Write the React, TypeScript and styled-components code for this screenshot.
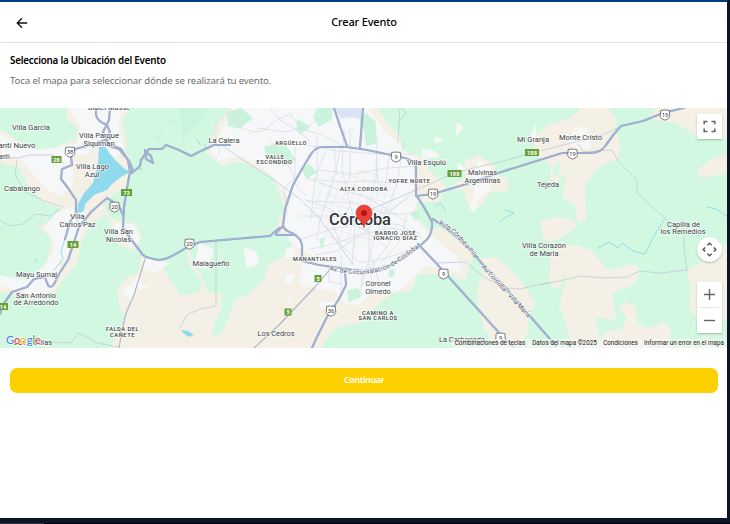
import React from "react";
import styled, { createGlobalStyle } from "styled-components";

const GlobalStyle = createGlobalStyle`
  * { box-sizing: border-box; }
  body { margin: 0; background: #0b1524; overflow: hidden; }
`;

const Frame = styled.div`
  width: 730px;
  height: 524px;
  display: flex;
  flex-direction: column;
  background: #0c1526;
  font-family: "Noto Sans", "Open Sans", sans-serif;
`;

const Screen = styled.div`
  width: 727px;
  height: 518px;
  display: flex;
  flex-direction: column;
  background: #fff;
  border-top: 2px solid #003e80;
`;

const TopBar = styled.header`
  height: 41px;
  flex: none;
  display: grid;
  grid-template-columns: 44px 1fr 44px;
  align-items: center;
  border-bottom: 1px solid #e2e2e2;
`;

const BackButton = styled.button`
  border: 0;
  padding: 1px 0 0;
  background: none;
  display: flex;
  justify-content: center;
  color: #111;
`;

const Title = styled.h1`
  margin: 0 0 2px 1px;
  text-align: center;
  font-size: 11px;
  line-height: 15px;
  font-weight: 500;
  letter-spacing: -0.17px;
  color: #000;
  white-space: nowrap;
`;

const Intro = styled.section`
  height: 65px;
  flex: none;
  padding: 11px 10px 0;
  display: flex;
  flex-direction: column;
  gap: 6px;
`;

const Heading = styled.h2`
  margin: 0;
  font-size: 9.8px;
  line-height: 14px;
  font-weight: 600;
  color: #000;
  letter-spacing: -0.22px;
`;

const Hint = styled.p`
  margin: 0;
  font-size: 9.6px;
  line-height: 14px;
  letter-spacing: -0.11px;
  color: #6d6d6d;
`;

const MapFrame = styled.div`
  position: relative;
  height: 240px;
  flex: none;
  overflow: hidden;
  background: #d3f8e2;
`;

const MapArt = styled.svg`
  display: block;
  font-family: Roboto, sans-serif;
`;

const Controls = styled.div`
  position: absolute;
  right: 5px;
  top: 6px;
  bottom: 15px;
  width: 25px;
  display: flex;
  flex-direction: column;
`;

const MapButton = styled.button<{ $round?: boolean }>`
  width: 25px;
  height: 25px;
  flex: none;
  padding: 0;
  border: 0;
  display: flex;
  align-items: center;
  justify-content: center;
  background: #fff;
  border-radius: ${(p) => (p.$round ? "50%" : "1px")};
  box-shadow: 0 1px 2px rgba(0, 0, 0, 0.25);
  margin-top: ${(p) => (p.$round ? "98px" : "0")};
`;

const ZoomGroup = styled.div`
  margin-top: auto;
  height: 51px;
  display: flex;
  flex-direction: column;
  align-items: center;
  background: #fff;
  border-radius: 1px;
  box-shadow: 0 1px 2px rgba(0, 0, 0, 0.25);
`;

const ZoomButton = styled.button`
  width: 25px;
  height: 25px;
  padding: 0;
  border: 0;
  background: none;
  display: flex;
  align-items: center;
  justify-content: center;
`;

const ZoomDivider = styled.div`
  width: 19px;
  height: 1px;
  background: #e2e2e2;
`;

const Credits = styled.div`
  position: absolute;
  right: 0;
  bottom: 0;
  height: 9px;
  display: flex;
  align-items: center;
  background: rgba(246, 246, 242, 0.65);
  font: 6.3px/9px Roboto, sans-serif;
  color: #222;
  white-space: nowrap;
`;

const Credit = styled.span<{ $w: number }>`
  width: ${(p) => p.$w}px;
  text-align: center;
`;

const Continue = styled.button`
  margin: 20px 9px 0 10px;
  height: 25px;
  flex: none;
  border: 0;
  border-radius: 7px;
  background: #ffd000;
  color: #fff;
  font: 600 9px/13px "Noto Sans", sans-serif;
  letter-spacing: -0.4px;
  padding: 0 0 2px;
`;

const Taskbar = styled.div`
  margin-top: auto;
  height: 1px;
  background: linear-gradient(90deg, #37343c 44px, #020207 44px);
`;

const CREAM = "#f5f0e5";
const URBAN = "#f6f7f8";
const GREEN = "#d3f8e2";

const creamAreas = [
  "M67 108H128L121 121 126 142 124 150 132 165 128 184 113 194 103 203 108 216 118 222 135 224 141 238 134 250 118 243 112 225 107 212 92 222 82 238 75 265 62 280 56 290 40 300 22 296 0 291V281L30 279 47 264 53 240 40 226 55 220 62 207 46 203 30 187 19 166 0 162V130L18 142 36 151 58 147 76 140 79 128 68 120Z",
  "M142 256 160 264 174 287 180 297 199 293 203 282 190 265 187 247 200 243 218 252 236 247 249 232 273 229 300 229 300 348H111L125 319 119 303 118 289 126 279 139 274Z",
  "M230 108H376L386 122 399 136 403 153 423 157 427 169 446 187 438 201 416 202 417 218 427 230 443 229 472 252 465 280 446 273 417 274 411 290 393 292 372 308 362 321 336 327 324 341 320 348H250L240 260 275 232 285 207 273 176 252 165 238 161 223 165 207 154 217 125Z",
  "M465 161 478 156 494 166 494 175 506 178 508 190 490 192 479 207 470 207 464 190 450 187 466 178Z",
  "M536 137 548 126 570 119 582 108H607L616 120 614 130 620 145 618 158 602 164 591 175 584 185 586 219 579 222 574 204 563 198 567 169 560 178 561 158 554 165 551 178 558 182 558 176 550 176 552 164 540 158 534 148Z",
  "M657 108H727V137L701 138 678 123 650 118Z",
  "M698 170 711 160 727 155V173L702 177Z",
  "M541 222 556 218 572 220 576 226 563 236 550 241 544 238Z",
  "M552 253Q556 248 569 246 582 246 590 251L608 271 626 267Q637 262 639 271 638 280 632 284L611 293 613 306 615 319 594 316 599 337 590 348H573L566 322 560 307 567 278Q568 271 564 274L559 287Q547 287 550 278Z",
  "M480 259 496 258 506 267 522 283 535 304 527 315 527 332 516 348H500L485 329 479 308 478 288 486 268Z",
  "M593 348 607 332 622 330 628 318 620 308 625 303 634 306 637 325 650 329 664 323 671 331 666 348Z",
  "M727 245V318L699 320 690 308 692 285 688 278 690 269 701 263 710 250Z",
  "M704 334 707 341 711 348H702Z",
];

const greenInsets = [
  "M240 240 252 232 275 230 294 243 281 257 268 263 264 278 249 293 234 299 227 320 220 334 213 336 214 326 221 311 223 294 208 291 201 273 193 263 190 249 205 242 220 253Z",
];

const urbanAreas = [
  "M69 108H124L117 121 121 140 124 150 105 162 98 139 87 154 70 154 73 182 63 195 48 190 22 160 3 153 0 136 38 151 77 144 82 127Z",
  "M57 213 80 205 85 216 80 235 68 249 66 260 47 263 57 245 45 228Z",
  "M0 276 25 281 49 263 58 260 60 268 51 290 30 294 0 285Z",
  "M115 224 133 225 139 239 132 247 122 240Z",
  "M143 256 157 261 168 263 154 272 145 269Z",
  "M139 277 141 286 149 286 135 290 132 301 122 292Z",
  "M234 108H367L383 130 399 146 412 158 415 179 417 199 410 215 433 238 455 256 461 272 426 265 410 279 397 292 372 292 359 304 345 303 335 291 300 285 303 264 315 257 292 243 285 226 291 201 276 179 259 164 238 155 219 160 212 150Z",
  "M479 161 492 171 490 190 479 198 474 211 470 208 475 197 473 174Z",
  "M575 127 587 129 590 147 577 149 570 143Z",
  "M244 248 256 252 258 264 247 267Z",
  "M200 244 213 250 207 268 195 266Z",
];

const parks = [
  "M265 147 278 145 286 147 295 160 284 165 278 158 267 158Z",
  "M298 120 309 127 300 134 297 129Z",
  "M309 165 316 172 307 178 302 169Z",
  "M318 108H332L331 119 319 126 314 117Z",
  "M228 113 241 109 252 118 239 128 228 125Z",
  "M359 118 366 114 375 122 376 143 367 145 364 128Z",
  "M411 213 418 211 420 219 414 219Z",
  "M320 240 324 238 322 248Z",
  "M348 291 358 289 360 297 349 301Z",
  "M390 271 394 270 393 276 389 276Z",
];

const pale = [
  "M457 135 462 127 457 124Z",
  "M436 137 442 140 436 142Z",
  "M422 149 435 152 439 157 424 157Z",
  "M529 141 535 126 536 140Z",
  "M458 164 465 169 459 170Z",
  "M287 249 294 247 293 256 286 258Z",
  "M286 275 293 275 292 284 286 283Z",
  "M288 298 292 297 290 303Z",
  "M320 302 338 303 335 309 321 308Z",
];

const localRoads = [
  "M220 144 240 158 277 182 301 200 320 219 353 264",
  "M49 342 71 343 78 333 85 336 97 343 119 347",
  "M362 213 400 197 430 184 456 172 500 162 540 151 602 135 618 128",
  "M0 157 18 158 30 155 53 155 64 164",
  "M578 144 584 152 612 150 618 161 637 180V193L670 223",
  "M0 220 10 226 23 224 36 214 51 216 60 209",
  "M540 285 568 279 581 276 604 278 628 277 639 271 660 273 687 270",
  "M687 271 684 248 683 220",
  "M216 242V306L200 309 187 315 180 328",
  "M437 263 466 262 484 277 505 288 520 289 550 282",
  "M400 108 398 141M398 123 406 113 402 108",
  "M17 161 15 174 24 191 44 201 63 207",
];

const regionalRoads = [
  "M145 259 134 295 126 313 122 330 119 348",
  "M332 267 315 287 278 326 254 348",
];

const streets = [
  "M232 110 239 127 253 132 263 131 275 121 290 114 301 129 320 134 341 145",
  "M230 110 216 123 216 143 220 149 218 155",
  "M270 108 280 120 300 132 310 142M257 128 285 132 307 126 321 118",
  "M295 144 295 178 284 188 287 213M270 140 291 170 296 185 305 195",
  "M317 137V178M334 147 337 175M350 128V178M376 150 378 184M390 151 385 186",
  "M307 178 323 184 340 190 362 195 385 208 406 222",
  "M304 199 328 208 346 219 365 230 386 247",
  "M300 216 330 216 360 220 400 225 421 237",
  "M301 239 332 229 358 224 390 210 414 194",
  "M310 249 333 244 360 235 389 228 419 233",
  "M327 147 315 179 311 219M341 145 333 183 320 220 317 239",
  "M377 138 376 178 369 211 369 268 374 290",
  "M404 141 397 184 388 205 374 239 362 285",
  "M417 188 391 211 367 230 337 251 315 255",
  "M416 166 387 168 354 174 320 170 308 174",
  "M417 214 387 214 352 203 306 201",
  "M344 130 342 169 349 200 355 224 352 265",
  "M307 145 337 151 380 154 414 154",
  "M312 179 339 182 373 181 414 184",
  "M397 223 389 244 377 260 364 276M407 216 400 241 379 265",
  "M331 219 340 244 360 263 386 258 407 251",
  "M328 264 329 282 343 284M341 256 341 294M362 267 361 295M371 255 380 287",
];

const highways = [
  "M96 108V115Q98 122 107 125M107 125 110 132 105 140 91 145 75 149 71 157 72 165 62 169 61 179 68 188 76 200 76 213 70 222 65 239",
  "M110 108 109 120 103 132 109 144 121 149 128 160 130 172 127 188 124 207 123 228 130 238 140 251Q143 257 150 258 161 262 170 257L188 247 200 242 270 236 279 228",
  "M123 215 119 206 107 198 91 212 79 227 73 245 68 260 59 274 54 284Q50 290 47 283L45 277 34 279 27 287 12 292 3 305 0 314",
  "M106 145 119 149 129 161 132 168 132 173 140 166 141 160 149 149 162 149 166 145 179 150 191 156 201 151 214 145 230 145",
  "M145 150 146 159 153 163 151 156 147 153",
  "M276 235 294 235",
  "M312 348 317 337 327 317 339 299 346 285 345 271",
  "M283 226Q285 231 292 233 303 239 302 248V261L319 265 333 267 363 271 387 267 407 256 423 243Q433 236 432 222 424 206 416 195V168Q416 160 401 157L367 150 347 147H322Q314 147 308 159L302 169 293 185 285 209 283 226 276 233",
  "M334 108 341 129 347 146M363 108 360 147",
  "M418 244 436 263 502 336 514 348",
  "M433 219 447 229 468 247 485 267 505 287 529 315 556 346",
  "M416 196 433 194 473 182 498 173 543 159 562 153H590Q601 153 606 145L614 134 621 126 643 121 663 113 684 108",
];

const rivers = [
  "M132 169 142 169M598 248 609 242 618 248 622 243 633 251 645 254 654 236 664 220",
  "M65 239 61 251 63 259 54 270M77 222 79 217",
  "M707 207 716 209 727 216M704 229 698 236",
  "M435 207 440 203 446 211M500 222 506 217 514 213 505 210",
  "M200 144 197 140M205 144 206 149M356 219 365 222 370 219",
];

type LabelProps = { x: number; y: number; w: number; text: string; caps?: boolean };

const labels: LabelProps[] = [
  { x: 31, y: 129.5, w: 38, text: "Villa Garcia" },
  { x: 17, y: 147.5, w: 37, text: "anti Nuevo" },
  { x: 4, y: 159, w: 11, text: "anti" },
  { x: 109, y: 110, w: 42, text: "Bialet Massé" },
  { x: 99, y: 138, w: 40, text: "Villa Parque" },
  { x: 99, y: 145.5, w: 31, text: "Siquiman" },
  { x: 92.5, y: 169, w: 33, text: "Villa Lago" },
  { x: 92, y: 177, w: 14.5, text: "Azul" },
  { x: 22, y: 190.5, w: 36, text: "Cabalango" },
  { x: 77.5, y: 219, w: 14.5, text: "Villa" },
  { x: 77.5, y: 227, w: 36, text: "Carlos Paz" },
  { x: 118.5, y: 234, w: 29, text: "Villa San" },
  { x: 118.5, y: 242, w: 25, text: "Nicolas" },
  { x: 36.5, y: 277, w: 41, text: "Mayu Sumaj" },
  { x: 36, y: 297.5, w: 40, text: "San Antonio" },
  { x: 36, y: 305, w: 45, text: "de Arredondo" },
  { x: 33, y: 345, w: 38, text: "Las Varillas" },
  { x: 224, y: 142.5, w: 31, text: "La Calera" },
  { x: 291, y: 144.5, w: 32, text: "ARGÜELLO", caps: true },
  { x: 275, y: 158.5, w: 19, text: "VALLE", caps: true },
  { x: 274.5, y: 164, w: 36, text: "ESCONDIDO", caps: true },
  { x: 364, y: 191, w: 48, text: "ALTA CÓRDOBA", caps: true },
  { x: 409.5, y: 182.5, w: 42, text: "YOFRE NORTE", caps: true },
  { x: 395.5, y: 234.5, w: 41, text: "BARRIO JOSÉ", caps: true },
  { x: 395.5, y: 240, w: 44, text: "IGNACIO DÍAZ", caps: true },
  { x: 315, y: 261, w: 44, text: "MANANTIALES", caps: true },
  { x: 378, y: 314.5, w: 32, text: "CAMINO A", caps: true },
  { x: 378, y: 320, w: 39, text: "SAN CARLOS", caps: true },
  { x: 122.5, y: 331, w: 33, text: "FALDA DEL", caps: true },
  { x: 122.5, y: 336.5, w: 25, text: "CAÑETE", caps: true },
  { x: 211, y: 266, w: 37, text: "Malagueño" },
  { x: 276, y: 336, w: 37, text: "Los Cedros" },
  { x: 378, y: 286, w: 25, text: "Coronel" },
  { x: 378, y: 293.5, w: 25.5, text: "Olmedo" },
  { x: 426.5, y: 165, w: 39, text: "Villa Esquiú" },
  { x: 482.5, y: 175, w: 29, text: "Malvinas" },
  { x: 482.5, y: 182.5, w: 36, text: "Argentinas" },
  { x: 533, y: 142, w: 32, text: "Mi Granja" },
  { x: 580.5, y: 140, w: 43, text: "Monte Cristo" },
  { x: 548, y: 187, w: 22, text: "Tejeda" },
  { x: 544, y: 248, w: 44, text: "Villa Corazón" },
  { x: 544, y: 256, w: 29, text: "de Maria" },
  { x: 683.5, y: 227, w: 33, text: "Capilla de" },
  { x: 683, y: 234, w: 45, text: "los Remedios" },
  { x: 462, y: 342, w: 46, text: "La Carbonada" },
];

function Label({ x, y, w, text, caps }: LabelProps) {
  return (
    <text
      x={x}
      y={y}
      textLength={w}
      textAnchor="middle"
      lengthAdjust="spacingAndGlyphs"
      fontSize={caps ? 5.7 : 7.5}
      fontWeight={caps ? 500 : 400}
      letterSpacing={caps ? 0.5 : 0}
      fill="#3a3e43"
      stroke="#fff"
      strokeOpacity={0.8}
      strokeWidth={1.4}
      paintOrder="stroke"
    >
      {text}
    </text>
  );
}

const shields: [number, number, string][] = [
  [70, 152, "38"], [114.5, 207, "20"], [189.5, 244, "20"], [331, 311, "36"],
  [396, 157, "9"], [433, 194, "19"], [443.5, 274, "9"], [500.5, 338, "9"],
  [572.5, 154, "19"], [665, 115, "19"],
];

function Shield({ x, y, n }: { x: number; y: number; n: string }) {
  return (
    <g transform={`translate(${x} ${y})`}>
      <path
        d="M-4.3-4.6Q0-5.3 4.3-4.6L4.8 1.5Q4.6 3.6 0 5.2-4.6 3.6-4.8 1.5Z"
        fill="#fff"
        stroke="#5a5e64"
        strokeWidth=".8"
      />
      <text y="2.1" textAnchor="middle" fontSize="5.8" fill="#333">{n}</text>
    </g>
  );
}

const plates: [number, number, string, number][] = [
  [56.5, 159.5, "28", 10], [126.5, 192.5, "73", 11], [73, 244.5, "14", 11], [3, 306.5, "14", 10],
  [318, 278.5, "5", 7], [288, 312, "5", 7], [454.5, 173.5, "188", 14], [532, 152.5, "188", 14],
];

function Plate({ x, y, n, w }: { x: number; y: number; n: string; w: number }) {
  return (
    <g transform={`translate(${x} ${y})`}>
      <rect x={-w / 2} y="-3.5" width={w} height="7" fill="#689f38" />
      <text y="2.1" textAnchor="middle" fontSize="5.7" fontWeight="700" fill="#fff">{n}</text>
    </g>
  );
}

function Drawn({ paths, fill }: { paths: string[]; fill: string }) {
  return (
    <g fill={fill} stroke={fill} strokeWidth="1.5" strokeLinejoin="round">
      {paths.map((d) => <path key={d} d={d} />)}
    </g>
  );
}

function Lines({ paths, color, width }: { paths: string[]; color: string; width: number }) {
  return (
    <g fill="none" stroke={color} strokeWidth={width} strokeLinejoin="round" strokeLinecap="round">
      {paths.map((d) => <path key={d} d={d} />)}
    </g>
  );
}

function CordobaMap() {
  return (
    <MapArt width="727" height="240" viewBox="0 108 727 240">
      <defs>
        <path id="ring" d="M330 268Q374 280 401 258L422 243" />
        <path id="pilar" d="M439 222Q452 228 460 238L480 261" />
        <path id="maria" d="M483 266 505 290 532 319" />
        <pattern id="blocks" width="8" height="8" patternUnits="userSpaceOnUse" patternTransform="rotate(16)">
          <path d="M0 0H8M0 0V8" stroke="#dbe0e7" strokeWidth=".8" fill="none" />
        </pattern>
      </defs>
      <rect x="0" y="108" width="727" height="240" fill={GREEN} />
      <path d="M180 108H207L197 126 190 130 182 145Z M154 139 164 130 161 141Z M166 122 174 119 177 126Z" fill="#cbf4dc" />
      <Drawn paths={creamAreas} fill={CREAM} />
      <Drawn paths={greenInsets} fill={GREEN} />
      <Drawn paths={urbanAreas} fill={URBAN} />
      <Drawn paths={parks} fill="#c9f3db" />
      <Drawn paths={pale} fill={URBAN} />
      <path d="M335 108H361V119L350 117 341 119Z" fill="#dbe3f6" />
      <path d="M320 182 345 169 374 172 395 187 393 219 377 237 352 249 326 236 313 216Z" fill="url(#blocks)" />
      <Lines paths={streets} color="#d8dee6" width={0.8} />
      <Lines paths={localRoads} color="#c0cad6" width={0.8} />
      <Lines paths={regionalRoads} color="#a9b5ca" width={1.1} />
      <Lines paths={rivers} color="#8cd9ea" width={0.9} />
      <path d="M99 147Q105 144 108 151L116 161 125 169 130 172 121 177 113 183 107 190 94 195 86 203 83 212 77 213 78 204 84 193 93 183 98 163Z" fill="#90daee" />
      <path d="M181 330 188 331 194 335 189 337 183 333Z" fill="#90daee" />
      <path d="M34 258 39 260 36 264Z" fill="#b3ebef" />
      <Lines paths={highways} color="#94a4c6" width={2.2} />
      <Lines paths={highways} color="#a6b6d4" width={1.2} />
      {shields.map(([x, y, n]) => <Shield key={`${x}-${n}`} x={x} y={y} n={n} />)}
      {plates.map(([x, y, n, w]) => <Plate key={`${x}-${n}`} x={x} y={y} n={n} w={w} />)}
      {labels.map((l) => <Label key={`${l.x}-${l.text}`} {...l} />)}
      <g fontSize="6.4" fill="#46536c" stroke="#f8f8f8" strokeWidth="1.3" paintOrder="stroke">
        <text dy="2"><textPath href="#ring">Av. de Circunvalación de Córdoba</textPath></text>
        <text dy="2"><textPath href="#pilar">Autp Córdoba Pilar</textPath></text>
        <text dy="2"><textPath href="#maria">Au Córdoba - Villa María</textPath></text>
      </g>
      <text x="360" y="225" textLength="62" textAnchor="middle" fontSize="16.5" fontWeight="500" fill="#33363a" stroke="#fff" strokeWidth="1.6" paintOrder="stroke">Córdoba</text>
      <path d="M364 228C363.3 221.5 356 219.5 356 213A8 8 0 0 1 372 213C372 219.5 364.7 221.5 364 228Z" fill="#ea4335" stroke="#c5221f" strokeWidth=".4" />
      <circle cx="364" cy="213" r="3" fill="#b31412" />
      <text x="6" y="344" fontSize="12" fontWeight="500" textLength="35" lengthAdjust="spacingAndGlyphs" stroke="#fff" strokeWidth="1.2" paintOrder="stroke" fontFamily="Lato, sans-serif">
        <tspan fill="#4285f4">G</tspan><tspan fill="#ea4335">o</tspan><tspan fill="#fbbc04">o</tspan><tspan fill="#4285f4">g</tspan><tspan fill="#34a853">l</tspan><tspan fill="#ea4335">e</tspan>
      </text>
    </MapArt>
  );
}

export default function App() {
  return (
    <>
      <GlobalStyle />
      <Frame>
        <Screen>
          <TopBar>
            <BackButton aria-label="Volver">
              <svg width="12" height="12" viewBox="0 0 12 12" fill="none" stroke="currentColor" strokeWidth="1.3">
                <path d="M11.2 6H1.5M6 1.2 1.2 6 6 10.8" />
              </svg>
            </BackButton>
            <Title>Crear Evento</Title>
          </TopBar>
          <Intro>
            <Heading>Selecciona la Ubicación del Evento</Heading>
            <Hint>Toca el mapa para seleccionar dónde se realizará tu evento.</Hint>
          </Intro>
          <MapFrame>
            <CordobaMap />
            <Controls>
              <MapButton aria-label="Pantalla completa">
                <svg width="13" height="13" viewBox="0 0 13 13" fill="none" stroke="#666" strokeWidth="1.6">
                  <path d="M1.2 4.3V1.5H4.5M8.5 1.5H11.8V4.3M11.8 8.5V11.5H8.5M4.5 11.5H1.2V8.5" />
                </svg>
              </MapButton>
              <MapButton $round aria-label="Controles de cámara">
                <svg width="15" height="15" viewBox="0 0 15 15" fill="none" stroke="#555" strokeWidth="1.5">
                  <path d="M5.4 3.2 7.5 1.2 9.6 3.2M11.8 5.4 13.8 7.5 11.8 9.6M9.6 11.8 7.5 13.8 5.4 11.8M3.2 9.6 1.2 7.5 3.2 5.4" />
                </svg>
              </MapButton>
              <ZoomGroup>
                <ZoomButton aria-label="Acercar">
                  <svg width="11" height="11" viewBox="0 0 11 11" stroke="#666" strokeWidth="1.4"><path d="M0 5.5H11M5.5 0V11" /></svg>
                </ZoomButton>
                <ZoomDivider />
                <ZoomButton aria-label="Alejar">
                  <svg width="11" height="11" viewBox="0 0 11 11" stroke="#666" strokeWidth="1.4"><path d="M0 5.5H11" /></svg>
                </ZoomButton>
              </ZoomGroup>
            </Controls>
            <Credits>
              <Credit $w={78}>Combinaciones de teclas</Credit>
              <Credit $w={71}>Datos del mapa ©2025</Credit>
              <Credit $w={41}>Condiciones</Credit>
              <Credit $w={86}>Informar un error en el mapa</Credit>
            </Credits>
          </MapFrame>
          <Continue>Continuar</Continue>
        </Screen>
        <Taskbar />
      </Frame>
    </>
  );
}
